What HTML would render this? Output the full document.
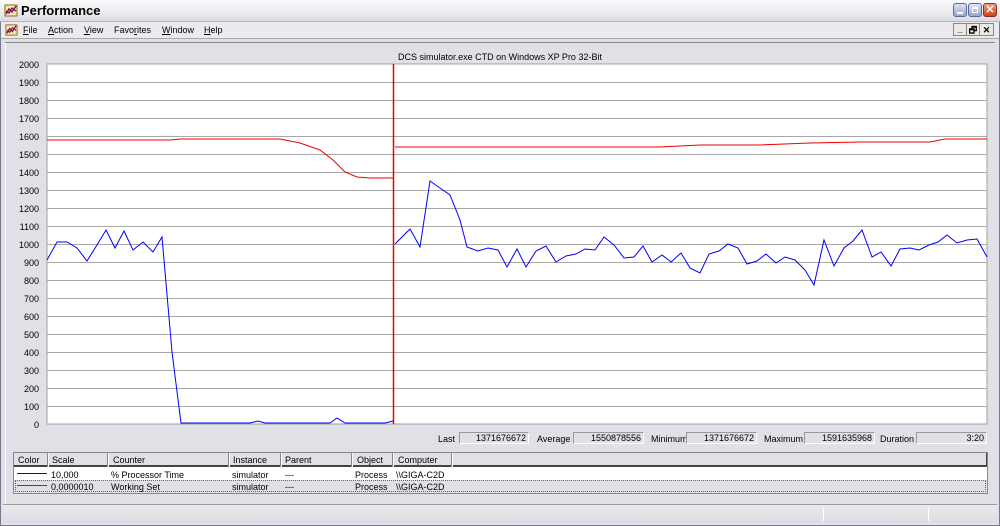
<!DOCTYPE html>
<html><head><meta charset="utf-8"><style>
*{margin:0;padding:0;box-sizing:border-box}
body{width:1000px;height:526px;overflow:hidden;background:#ece9d8;font-family:"Liberation Sans",sans-serif;font-size:9px;color:#000;position:relative}
.abs{position:absolute}
</style></head><body>
<div class="abs" style="left:0;top:0;width:1000px;height:526px;background:#e1e0e6;border:1px solid #7a7a8c"></div>
<div class="abs" style="left:0;top:0;width:1000px;height:22px;background:linear-gradient(#fbfbfc,#ebebf0 60%,#dcdce3);border-bottom:1px solid #b4b4c0"></div>
<svg class="abs" style="left:4px;top:3px" width="14" height="14" viewBox="0 0 14 14"><rect x="1" y="2" width="12" height="11" fill="#f4e7b0" stroke="#8a6b20"/><path d="M2 11L5 6 8 9 12 3" stroke="#c00" stroke-width="1.5" fill="none"/><path d="M2 8L5 10 8 5 12 8" stroke="#22a" stroke-width="1.2" fill="none"/></svg>
<div class="abs" style="left:21px;top:3px;font-size:13px;font-weight:bold">Performance</div>
<div class="abs" style="left:953px;top:3px;width:14px;height:14px;border:1px solid #5a6a9a;border-radius:3px;background:linear-gradient(#dfe3f4,#9aa6cc)"><div style="margin:8px 3px 0;width:6px;height:2px;background:#fff"></div></div>
<div class="abs" style="left:968px;top:3px;width:14px;height:14px;border:1px solid #5a6a9a;border-radius:3px;background:linear-gradient(#dfe3f4,#9aa6cc)"><div style="margin:3px;width:6px;height:6px;border:1px solid #fff;border-top-width:2px"></div></div>
<div class="abs" style="left:983px;top:3px;width:14px;height:14px;border:1px solid #8a3020;border-radius:3px;background:linear-gradient(#f0a080,#d04020);color:#fff;font-size:11px;font-weight:bold;text-align:center;line-height:12px">✕</div>
<div class="abs" style="left:1px;top:22px;width:998px;height:17px;background:#ebeaef;border-bottom:1px solid #aaa"></div>
<svg class="abs" style="left:5px;top:23px" width="13" height="13" viewBox="0 0 14 14"><rect x="1" y="2" width="12" height="11" fill="#f4e7b0" stroke="#8a6b20"/><path d="M2 11L5 6 8 9 12 3" stroke="#c00" stroke-width="1.5" fill="none"/><path d="M2 8L5 10 8 5 12 8" stroke="#22a" stroke-width="1.2" fill="none"/></svg>
<div class="abs" style="left:23px;top:25px"><u>F</u>ile</div>
<div class="abs" style="left:48px;top:25px"><u>A</u>ction</div>
<div class="abs" style="left:84px;top:25px"><u>V</u>iew</div>
<div class="abs" style="left:114px;top:25px">Favo<u>r</u>ites</div>
<div class="abs" style="left:162px;top:25px"><u>W</u>indow</div>
<div class="abs" style="left:204px;top:25px"><u>H</u>elp</div>
<div class="abs" style="left:953px;top:23px;width:14px;height:13px;border:1px solid #888;background:#ece9e4;font-weight:bold;text-align:center;line-height:10px">_</div>
<div class="abs" style="left:966px;top:23px;width:14px;height:13px;border:1px solid #888;background:#ece9e4;font-weight:bold;text-align:center;line-height:12px">🗗</div>
<div class="abs" style="left:979px;top:23px;width:15px;height:13px;border:1px solid #888;background:#ece9e4;font-weight:bold;text-align:center;line-height:12px">✕</div>
<div class="abs" style="left:5px;top:42px;width:990px;height:1px;background:#888"></div>
<div class="abs" style="left:5px;top:43px;width:990px;height:460px;background:#e1e0e6;border-left:1px solid #fff"></div>
<div class="abs" style="left:0;top:52px;width:1000px;text-align:center">DCS simulator.exe CTD on Windows XP Pro 32-Bit</div>
<svg class="abs" style="left:0;top:0" width="1000" height="430">
<rect x="47" y="64" width="940" height="360" fill="#fff" stroke="#a0a0a0"/>
<g stroke="#a8a8a8" stroke-width="1">
<path d="M47 82.5H987M47 100.5H987M47 118.5H987M47 136.5H987M47 154.5H987M47 172.5H987M47 190.5H987M47 208.5H987M47 226.5H987M47 244.5H987M47 262.5H987M47 280.5H987M47 298.5H987M47 316.5H987M47 334.5H987M47 352.5H987M47 370.5H987M47 388.5H987M47 406.5H987"/>
</g>
<g font-family="Liberation Sans" font-size="9" text-anchor="end">
<text x="39" y="68">2000</text><text x="39" y="86">1900</text><text x="39" y="104">1800</text><text x="39" y="122">1700</text><text x="39" y="140">1600</text><text x="39" y="158">1500</text><text x="39" y="176">1400</text><text x="39" y="194">1300</text><text x="39" y="212">1200</text><text x="39" y="230">1100</text><text x="39" y="248">1000</text><text x="39" y="266">900</text><text x="39" y="284">800</text><text x="39" y="302">700</text><text x="39" y="320">600</text><text x="39" y="338">500</text><text x="39" y="356">400</text><text x="39" y="374">300</text><text x="39" y="392">200</text><text x="39" y="410">100</text><text x="39" y="428">0</text>
</g>
<polyline fill="none" stroke="#e00" stroke-width="1" points="47,140 170,140 180,139 280,139 300,143 320,150 333,160 345,172 357,177 370,178 393,178"/>
<polyline fill="none" stroke="#e00" stroke-width="1" points="395,147 660,147 700,145 760,145 810,143 860,142 930,142 945,139 987,139"/>
<polyline fill="none" stroke="#00f" stroke-width="1" points="47,260 57,242 67,242 77,248 87,261 97,245 106,230 115,248 124,231 133,250 143,242 153,252 162,237 172,352 181,423 250,423 258,421 265,423 330,423 337,418 345,423 385,423 393,421"/>
<polyline fill="none" stroke="#00f" stroke-width="1" points="395,244 410,229 420,247 430,181 440,188 450,195 460,220 467,247 478,251 488,248 498,250 507,267 517,249 526,267 536,251 546,246 556,262 566,256 576,254 585,249 595,250 604,237 614,245 624,258 634,257 643,246 652,262 662,255 671,262 681,253 690,268 700,273 709,254 719,251 728,244 738,248 747,264 757,261 766,254 776,263 785,257 795,260 805,270 814,285 824,240 834,266 844,248 853,241 862,230 872,257 881,252 891,266 900,249 910,248 919,250 929,245 938,242 947,235 957,243 967,240 977,239 987,257"/>
<line x1="393.5" y1="64" x2="393.5" y2="424" stroke="#e00" stroke-width="1.5"/>
</svg>
<div class="abs" style="left:438px;top:434px">Last</div>
<div class="abs" style="left:459px;top:432px;width:70px;height:12px;border:1px solid #999;border-right-color:#fff;border-bottom-color:#fff;text-align:right;padding-right:2px;line-height:10px">1371676672</div>
<div class="abs" style="left:537px;top:434px">Average</div>
<div class="abs" style="left:573px;top:432px;width:71px;height:12px;border:1px solid #999;border-right-color:#fff;border-bottom-color:#fff;text-align:right;padding-right:2px;line-height:10px">1550878556</div>
<div class="abs" style="left:651px;top:434px">Minimum</div>
<div class="abs" style="left:686px;top:432px;width:71px;height:12px;border:1px solid #999;border-right-color:#fff;border-bottom-color:#fff;text-align:right;padding-right:2px;line-height:10px">1371676672</div>
<div class="abs" style="left:764px;top:434px">Maximum</div>
<div class="abs" style="left:804px;top:432px;width:71px;height:12px;border:1px solid #999;border-right-color:#fff;border-bottom-color:#fff;text-align:right;padding-right:2px;line-height:10px">1591635968</div>
<div class="abs" style="left:880px;top:434px">Duration</div>
<div class="abs" style="left:916px;top:432px;width:71px;height:12px;border:1px solid #999;border-right-color:#fff;border-bottom-color:#fff;text-align:right;padding-right:2px;line-height:10px">3:20</div>
<div class="abs" style="left:13px;top:452px;width:975px;height:42px;background:#e1e0e6;border:1px solid #888"></div>
<div class="abs" style="left:14px;top:453px;width:973px;height:14px;background:#e1e0e6;border-bottom:2px solid #444;border-right:1px solid #444"></div>
<div class="abs" style="left:14px;top:467px;width:973px;height:13px;background:#fff"></div>
<div class="abs" style="left:15px;top:480px;width:971px;height:12px;border:1px dotted #666"></div>
<svg class="abs" style="left:0;top:452px" width="1000" height="16"><g stroke="#fff"><path d="M48.5 1V15M108.5 1V15M229.5 1V15M281.5 1V15M352.5 1V15M393.5 1V15M452.5 1V15"/></g><g stroke="#888"><path d="M47.5 1V15M107.5 1V15M228.5 1V15M280.5 1V15M351.5 1V15M392.5 1V15M451.5 1V15"/></g></svg>
<svg class="abs" style="left:0;top:466px" width="60" height="24"><line x1="17" y1="7.5" x2="47" y2="7.5" stroke="#0000ff" stroke-width="1"/><line x1="17" y1="19.5" x2="47" y2="19.5" stroke="#ff0000" stroke-width="1"/></svg>
<div class="abs" style="left:18px;top:455px">Color</div>
<div class="abs" style="left:52px;top:455px">Scale</div>
<div class="abs" style="left:113px;top:455px">Counter</div>
<div class="abs" style="left:233px;top:455px">Instance</div>
<div class="abs" style="left:285px;top:455px">Parent</div>
<div class="abs" style="left:357px;top:455px">Object</div>
<div class="abs" style="left:398px;top:455px">Computer</div>
<div class="abs" style="left:51px;top:470px">10,000</div>
<div class="abs" style="left:111px;top:470px">% Processor Time</div>
<div class="abs" style="left:232px;top:470px">simulator</div>
<div class="abs" style="left:285px;top:470px">---</div>
<div class="abs" style="left:355px;top:470px">Process</div>
<div class="abs" style="left:396px;top:470px">\\GIGA-C2D</div>
<div class="abs" style="left:51px;top:482px">0,0000010</div>
<div class="abs" style="left:111px;top:482px">Working Set</div>
<div class="abs" style="left:232px;top:482px">simulator</div>
<div class="abs" style="left:285px;top:482px">---</div>
<div class="abs" style="left:355px;top:482px">Process</div>
<div class="abs" style="left:396px;top:482px">\\GIGA-C2D</div>
<div class="abs" style="left:3px;top:504px;width:994px;height:1px;background:#999"></div>
<div class="abs" style="left:3px;top:505px;width:994px;height:18px;background:linear-gradient(#eaeaee,#dcdce2)"></div>
<div class="abs" style="left:823px;top:508px;width:1px;height:13px;background:#fff"></div>
<div class="abs" style="left:928px;top:508px;width:1px;height:13px;background:#fff"></div>
</body></html>
